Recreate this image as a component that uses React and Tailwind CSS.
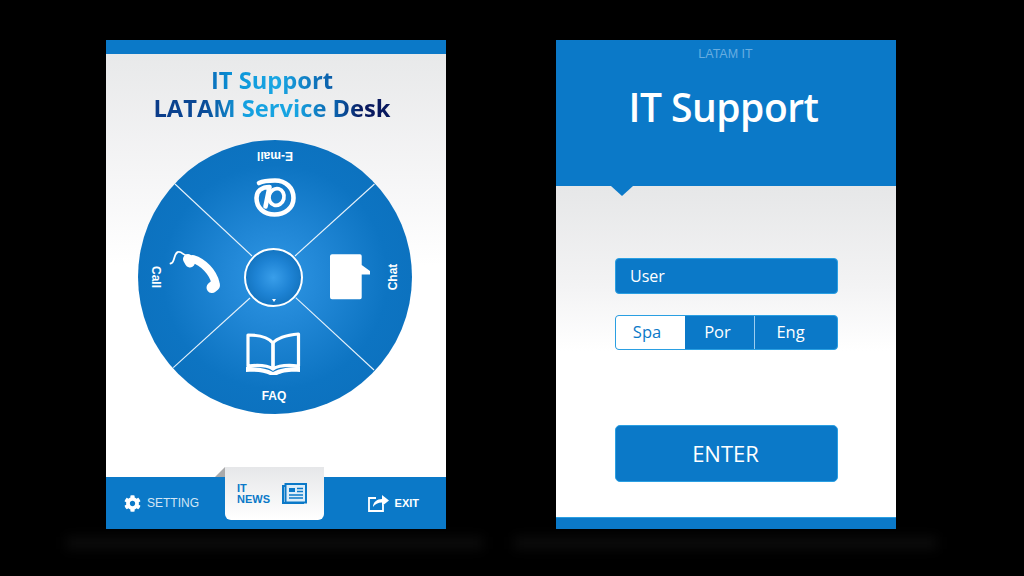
import React from "react";
import { FaCog } from "react-icons/fa";

const arial = "font-['Liberation_Sans',Arial,sans-serif]";
const seg = "font-['Open_Sans','Noto_Sans',sans-serif]";

function Wheel() {
  return (
    <div className="relative w-[274px] h-[274px] rounded-full bg-[radial-gradient(circle,#2f97e4_0%,#2389d8_22%,#0d74c2_58%,#0a6eba_100%)] shadow-[0_0_1px_#ffffff]">
      <svg className="absolute inset-0" width="274" height="274" viewBox="138 140 274 274" fill="none">
        <g stroke="#e6f2fb" strokeWidth="1.1">
          <path d="M175 184 L252 256" />
          <path d="M374.5 184 L295 256" />
          <path d="M173.3 367.7 L250 298" />
          <path d="M374 370 L295.7 297.7" />
        </g>
        {/* at sign, upside down */}
        <g stroke="#fff" fill="none" strokeLinecap="round" strokeLinejoin="round">
          <path d="M259 183 C 264 180.5 270 180.5 275 180.5 C 286 180.5 293.5 188 293.5 198 C 293.5 208 285 214.5 274.5 214.5 C 264 214.5 256.5 208 256.5 198 C 256.5 191 262 187 269.5 187 L 265.5 206.5" strokeWidth="4.6" />
          <ellipse cx="276.5" cy="197" rx="7.5" ry="8.5" strokeWidth="3.8" transform="rotate(15 276.5 197)" />
        </g>
        {/* phone */}
        <g fill="none" stroke="#fff" strokeLinecap="round" strokeLinejoin="round">
          <path d="M170.5 263.5 C 175 263.5 173.5 253 178 252 C 182 251 183 255.5 187 255.5" strokeWidth="1.8" />
          <path d="M188 259 L190 262.5" strokeWidth="10" />
          <path d="M193 259 C 203 262 213 272 215.5 283" strokeWidth="8" />
          <path d="M212 287.5 L214.5 285.5" strokeWidth="11" />
        </g>
        {/* chat */}
        <path d="M332 254.3 H360 a1.7 1.7 0 0 1 1.7 1.7 V265 L370 271 V274.5 H361.7 V297.5 a1.7 1.7 0 0 1 -1.7 1.7 H332 a2 2 0 0 1 -2 -2 V256.3 a2 2 0 0 1 2 -2 Z" fill="#fff" />
        {/* book */}
        <g fill="none" stroke="#fff" strokeWidth="3.2" strokeLinejoin="round">
          <path d="M248 335 C 258 335 268 337 273 343 V369 C 267 365 257 365 248 366 Z" />
          <path d="M298.5 334 C 288 335 278 337 273 343 V369 C 279 365 289 365 298.5 366 Z" />
        </g>
        <path d="M246 367 V372 C 255 371 265 372 270 375 H277 C 282 372 292 371 300 372 V367 C 290 367 280 368 273 372 C 266 368 256 367 246 367 Z" fill="#fff" />
      </svg>

      <span className={`${arial} absolute left-1/2 top-[9px] -translate-x-1/2 rotate-180 text-[12px] leading-[14px] font-bold text-white`}>E-mail</span>
      <span className={`${arial} absolute left-[136px] bottom-[11px] -translate-x-1/2 text-[12px] leading-[14px] font-bold text-white`}>FAQ</span>
      <span className={`${arial} absolute left-[18px] top-1/2 w-0 h-0 flex items-center justify-center rotate-90 text-[12px] font-bold text-white`}>Call</span>
      <span className={`${arial} absolute left-[255px] top-1/2 w-0 h-0 flex items-center justify-center -rotate-90 text-[12px] font-bold text-white`}>Chat</span>

      <div className="absolute left-[106px] top-[108px] w-[59px] h-[59px] rounded-full border-[2.5px] border-white bg-[radial-gradient(circle,#399eea_0%,#1e83d4_45%,#0966ae_100%)] flex flex-col items-center justify-end pb-[3px]">
        <div className="w-0 h-0 border-l-[2.5px] border-r-[2.5px] border-t-[3px] border-l-transparent border-r-transparent border-t-white" />
      </div>
    </div>
  );
}

function Footer() {
  return (
    <div className="relative h-[52px] bg-[#0b79c8] flex items-center justify-between pl-[18px] pr-[27px]">
      <div className="flex items-center gap-[6px]">
        <FaCog className="text-white w-[17px] h-[17px]" />
        <span className={`${arial} text-[12px] text-[#d3e6f5]`}>SETTING</span>
      </div>
      <div className="flex items-center gap-[6px]">
        <svg width="21" height="18" viewBox="0 0 21 18" fill="none">
          <path d="M8 4 H1 V17 H15 V11" stroke="#fff" strokeWidth="1.8" />
          <path d="M5 13 C 5 8 9 5 14 5 V1 L21 6.5 L14 12 V8.5 C 10 8.5 7 10 5 13 Z" fill="#fff" />
        </svg>
        <span className={`${arial} text-[11px] font-bold text-white`}>EXIT</span>
      </div>
      <div className="absolute left-[119px] top-[-10px] w-[99px] h-[53px] rounded-b-[6px] bg-[linear-gradient(#e6e7e9,#ffffff)] flex items-center gap-[12px] pl-[12px]">
        <span className={`${arial} text-[11px] leading-[11px] font-bold text-[#0b79c8]`}>IT<br />NEWS</span>
        <svg width="25" height="21" viewBox="0 0 25 21" fill="none">
          <rect x="3.5" y="1" width="20.5" height="18.5" fill="#dcedf9" stroke="#0b79c8" strokeWidth="2" />
          <path d="M3 3 H1 V20 H22" stroke="#0b79c8" strokeWidth="2" />
          <rect x="7" y="5" width="6" height="4" fill="#0b79c8" />
          <path d="M15 5.5 H21 M15 8.5 H21 M7 12 H21 M7 15 H21" stroke="#0b79c8" strokeWidth="1.4" />
        </svg>
      </div>
      <div className="absolute left-[109px] top-[-10px] w-0 h-0 border-l-[10px] border-b-[10px] border-t-0 border-l-transparent border-b-[#a9aaab]" />
    </div>
  );
}

export default function App() {
  return (
    <div className="relative w-[1024px] h-[576px] bg-black overflow-hidden flex items-start pt-[40px] pl-[106px] gap-[110px]">
      {/* faint floor reflection */}
      <div className="absolute left-[66px] top-[537px] w-[417px] h-[12px] bg-[#0c0c0c] blur-[6px]" />
      <div className="absolute left-[514px] top-[537px] w-[423px] h-[12px] bg-[#0c0c0c] blur-[6px]" />

      {/* Left panel */}
      <div className="relative w-[340px] h-[489px] flex flex-col bg-white">
        <div className="h-[14px] bg-[#0b79c8]" />
        <div className="flex-1 flex flex-col items-center bg-[linear-gradient(#e8e9ea_0%,#f5f5f6_28%,#ffffff_50%)]">
          <div className={`${seg} mt-[12px] mr-[8px] text-[23.7px] leading-[28px] font-bold text-center`}>
            <div className="bg-[linear-gradient(90deg,#0a6fbb_0%,#0a94d8_18%,#1aa7e4_55%,#0a5ca8_100%)] bg-clip-text text-transparent w-fit mx-auto">IT Support</div>
            <div className="bg-[linear-gradient(90deg,#0b3a88_0%,#0a4c98_22%,#14a0e0_38%,#18a5e2_60%,#0a5aa6_78%,#08195f_88%,#08195f_100%)] bg-clip-text text-transparent w-fit mx-auto">LATAM Service Desk</div>
          </div>
          <div className="mt-[18px] mr-[2px]"><Wheel /></div>
        </div>
        <Footer />
      </div>

      {/* Right panel */}
      <div className="relative w-[340px] h-[489px] flex flex-col bg-white">
        <div className="relative h-[146px] bg-[#0b79c8] flex flex-col items-center">
          <span className={`${arial} mt-[7px] mr-[1px] text-[12.5px] leading-[14px] text-[#68ade0]`}>LATAM IT</span>
          <span className={`${seg} mt-[21px] mr-[5px] text-[39px] leading-[50px] font-semibold tracking-[-0.5px] text-white`}>IT Support</span>
          <div className="absolute left-[55px] top-[146px] w-0 h-0 border-l-[11px] border-r-[11px] border-t-[10px] border-l-transparent border-r-transparent border-t-[#0b79c8]" />
        </div>
        <div className="flex-1 flex flex-col pl-[59px] pr-[58px] pt-[72px] bg-[linear-gradient(#e6e7e8_0%,#f3f3f4_30%,#ffffff_50%)]">
          <div className={`${seg} h-[36px] rounded-[4px] bg-[#0b79c8] border border-[#2a9fe2] flex items-center pl-[14px] text-[16px] text-white`}>User</div>
          <div className={`${seg} mt-[21px] h-[35px] rounded-[4px] bg-[#0b79c8] border border-[#2a9fe2] flex items-center text-[16.5px] text-white overflow-hidden`}>
            <div className="w-[69px] h-full bg-white text-[#0b79c8] flex items-center justify-center pr-[7px]">Spa</div>
            <div className="w-[70px] h-full flex items-center justify-center border-r border-[#9ccdf0] pr-[4px]">Por</div>
            <div className="flex-1 h-full flex items-center justify-center pr-[11px]">Eng</div>
          </div>
          <div className={`${seg} mt-[75px] h-[57px] rounded-[5px] bg-[#0b79c8] border border-[#2a9fe2] flex items-center justify-center pr-[2px] text-[22px] text-white`}>ENTER</div>
        </div>
        <div className="h-[12px] bg-[#0b79c8] border-t border-[#2a9fe2]" />
      </div>
    </div>
  );
}
